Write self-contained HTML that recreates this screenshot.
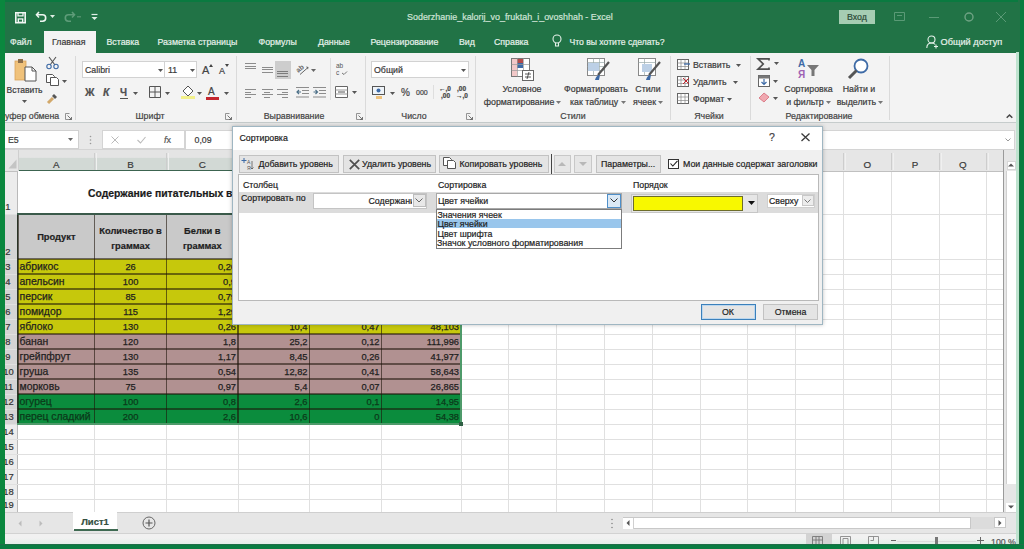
<!DOCTYPE html>
<html><head><meta charset="utf-8"><style>
*{box-sizing:border-box;margin:0;padding:0}
html,body{width:1024px;height:549px;overflow:hidden;background:#0b8a3e;font-family:"Liberation Sans",sans-serif;position:relative}
.a{position:absolute}
.t{position:absolute;white-space:nowrap;color:#3b3b3b;-webkit-text-stroke:0.2px currentColor}
svg.a{overflow:visible}
</style></head><body>
<div class="a" style="left:5px;top:0px;width:1014px;height:52.5px;background:#217346"></div>
<div class="a" style="left:5px;top:0px;width:1013px;height:2px;background:#0a7a40"></div>
<svg class="a" style="left:15px;top:12.3px;" width="11" height="11.5" viewBox="0 0 11 11.5"><path d="M0.8 0.8h9.4v9.9H0.8z" fill="none" stroke="#f2f7f4" stroke-width="1.6"/><path d="M3 0.8v3h5v-3" fill="none" stroke="#f2f7f4" stroke-width="1.3"/><rect x="2.6" y="6.3" width="5.8" height="4.4" fill="#f2f7f4"/><rect x="4" y="7.6" width="3" height="2" fill="#217346"/></svg>
<svg class="a" style="left:35px;top:10px;" width="14" height="13" viewBox="0 0 14 13"><path d="M4 2L1.5 4.8 4 7.5" fill="none" stroke="#eef6f1" stroke-width="1.6"/><path d="M2 4.8h5.5a3.2 3.2 0 0 1 0 6.4H5" fill="none" stroke="#eef6f1" stroke-width="1.6"/></svg>
<svg class="a" style="left:50px;top:15px;" width="5" height="3" viewBox="0 0 5 3"><path d="M0 0h5L2.5 3z" fill="#dfeee5"/></svg>
<svg class="a" style="left:62px;top:10px;" width="14" height="13" viewBox="0 0 14 13"><path d="M10 2l2.5 2.8L10 7.5" fill="none" stroke="#5e9c79" stroke-width="1.6"/><path d="M12 4.8H6.5a3.2 3.2 0 0 0 0 6.4H9" fill="none" stroke="#5e9c79" stroke-width="1.6"/></svg>
<svg class="a" style="left:77px;top:16px;" width="5" height="2" viewBox="0 0 5 2"><path d="M0 0h4v1.5H0z" fill="#4f8f6a"/></svg>
<svg class="a" style="left:91px;top:13px;" width="7" height="8" viewBox="0 0 7 8"><path d="M0.5 1.5h6" stroke="#dfeee5" stroke-width="1.2"/><path d="M0.5 4h6L3.5 7z" fill="#dfeee5"/></svg>
<div class="t" style="left:407px;top:12.92px;font-size:8.95px;line-height:8.95px;color:#cfe3d6">Soderzhanie_kalorij_vo_fruktah_i_ovoshhah - Excel</div>
<div class="a" style="left:839px;top:10px;width:36px;height:14px;background:#a6cdb3"></div>
<div class="t" style="left:837.00px;width:40px;text-align:center;top:13.05px;font-size:8.8px;line-height:8.8px;color:#2b4a37">Вход</div>
<svg class="a" style="left:894px;top:12px;" width="11" height="9" viewBox="0 0 11 9"><path d="M0.5 0.5h10v8h-10z" fill="none" stroke="#5a9a76" stroke-width="1"/><path d="M3 3.5h5" stroke="#5a9a76"/></svg>
<div class="a" style="left:929px;top:17px;width:10px;height:1px;background:#5a9a76"></div>
<svg class="a" style="left:963px;top:11px;" width="12" height="11" viewBox="0 0 12 11"><circle cx="6" cy="6" r="4" fill="none" stroke="#6fa384" stroke-width="1.4"/></svg>
<svg class="a" style="left:995px;top:11px;" width="12" height="12" viewBox="0 0 12 12"><path d="M1 1l10 10M11 1L1 11" stroke="#5a9a76" stroke-width="1"/></svg>
<div class="t" style="left:10px;top:38.05px;font-size:8.8px;line-height:8.8px;color:#e6f1ea">Файл</div>
<div class="a" style="left:44px;top:31px;width:52px;height:22px;background:#f3f3f3"></div>
<div class="t" style="left:52px;top:38.05px;font-size:8.8px;line-height:8.8px;color:#3a3a3a">Главная</div>
<div class="t" style="left:106.5px;top:38.05px;font-size:8.8px;line-height:8.8px;color:#e6f1ea">Вставка</div>
<div class="t" style="left:157.5px;top:38.05px;font-size:8.8px;line-height:8.8px;color:#e6f1ea">Разметка страницы</div>
<div class="t" style="left:258.5px;top:38.05px;font-size:8.8px;line-height:8.8px;color:#e6f1ea">Формулы</div>
<div class="t" style="left:318px;top:38.05px;font-size:8.8px;line-height:8.8px;color:#e6f1ea">Данные</div>
<div class="t" style="left:370.5px;top:38.05px;font-size:8.8px;line-height:8.8px;color:#e6f1ea">Рецензирование</div>
<div class="t" style="left:459px;top:38.05px;font-size:8.8px;line-height:8.8px;color:#e6f1ea">Вид</div>
<div class="t" style="left:494px;top:38.05px;font-size:8.8px;line-height:8.8px;color:#e6f1ea">Справка</div>
<svg class="a" style="left:552px;top:34px;" width="10" height="14" viewBox="0 0 10 14"><circle cx="5" cy="5" r="4" fill="none" stroke="#e6f1ea" stroke-width="1.1"/><path d="M3.5 9v3h3V9" fill="none" stroke="#e6f1ea" stroke-width="1.1"/></svg>
<div class="t" style="left:569.5px;top:38.22px;font-size:8.6px;line-height:8.6px;color:#e6f1ea">Что вы хотите сделать?</div>
<svg class="a" style="left:926px;top:35px;" width="13" height="14" viewBox="0 0 13 14"><circle cx="5.5" cy="4.5" r="3.5" fill="none" stroke="#e6f1ea" stroke-width="1.1"/><path d="M0.8 13c0-3.5 2-5 4.7-5s3 .8 3.6 1.5" fill="none" stroke="#e6f1ea" stroke-width="1.1"/><path d="M10 9.5v4M8 11.5h4" stroke="#e6f1ea" stroke-width="1.1"/></svg>
<div class="t" style="left:940.5px;top:37.71px;font-size:9.2px;line-height:9.2px;color:#e6f1ea">Общий доступ</div>
<div class="a" style="left:5px;top:52.5px;width:1013px;height:70.5px;background:#f3f3f3"></div>
<div class="a" style="left:5px;top:122px;width:1013px;height:1px;background:#c6cccc"></div>
<div class="a" style="left:75px;top:56px;width:1px;height:64px;background:#dadada"></div>
<div class="a" style="left:235.5px;top:56px;width:1px;height:64px;background:#dadada"></div>
<div class="a" style="left:365px;top:56px;width:1px;height:64px;background:#dadada"></div>
<div class="a" style="left:475px;top:56px;width:1px;height:64px;background:#dadada"></div>
<div class="a" style="left:670px;top:56px;width:1px;height:64px;background:#dadada"></div>
<div class="a" style="left:750px;top:56px;width:1px;height:64px;background:#dadada"></div>
<div class="a" style="left:888.5px;top:56px;width:1px;height:64px;background:#dadada"></div>
<svg class="a" style="left:13px;top:58px;" width="26" height="24" viewBox="0 0 26 24"><rect x="2" y="3" width="11" height="19" fill="#f0c27b" stroke="#d9a35a" stroke-width="0.8"/><rect x="5" y="1" width="5" height="4" fill="#8a6d4a"/><path d="M12 9h7l4 4v10H12z" fill="#fff" stroke="#555" stroke-width="1"/><path d="M19 9v4h4" fill="none" stroke="#555" stroke-width="1"/></svg>
<div class="t" style="left:6.5px;top:86.30px;font-size:8.5px;line-height:8.5px;color:#3a3a3a">Вставить</div>
<svg class="a" style="left:22px;top:100px;" width="5" height="3" viewBox="0 0 5 3"><path d="M0 0h5L2.5 3z" fill="#555"/></svg>
<svg class="a" style="left:46px;top:56px;" width="13" height="13" viewBox="0 0 13 13"><path d="M3 1l6 8M10 1L4 9" stroke="#555" stroke-width="1.1"/><circle cx="3" cy="10.5" r="2.2" fill="none" stroke="#3d6aa6" stroke-width="1.1"/><circle cx="10" cy="10.5" r="2.2" fill="none" stroke="#3d6aa6" stroke-width="1.1"/></svg>
<svg class="a" style="left:46px;top:74px;" width="13" height="12" viewBox="0 0 13 12"><path d="M0.5 0.5h6l2 2v6h-8z" fill="#fff" stroke="#555"/><path d="M4.5 3.5h6l2 2v6h-8z" fill="#fff" stroke="#555"/></svg>
<svg class="a" style="left:62px;top:80px;" width="5" height="3" viewBox="0 0 5 3"><path d="M0 0h5L2.5 3z" fill="#555"/></svg>
<svg class="a" style="left:47px;top:92px;" width="12" height="12" viewBox="0 0 12 12"><path d="M1 11l5-5" stroke="#d2a86a" stroke-width="3"/><path d="M7 2l3 3-2 2-3-3z" fill="#555"/></svg>
<div class="t" style="left:5px;top:111.85px;font-size:8.8px;line-height:8.8px;color:#444">уфер обмена</div>
<svg class="a" style="left:65px;top:113px;" width="7" height="7" viewBox="0 0 7 7"><path d="M0.5 0.5h4M0.5 0.5v6M0.5 6.5h6" fill="none" stroke="#888" stroke-width="0.9"/><path d="M2.5 2.5l4 4M6.5 4v2.5H4" fill="none" stroke="#666" stroke-width="0.9"/></svg>
<div class="a" style="left:82px;top:61px;width:83px;height:17px;background:#fff;border:1px solid #d2d2d2"></div>
<div class="t" style="left:85px;top:66.05px;font-size:8.8px;line-height:8.8px;color:#3a3a3a">Calibri</div>
<svg class="a" style="left:158px;top:69px;" width="5" height="3" viewBox="0 0 5 3"><path d="M0 0h5L2.5 3z" fill="#555"/></svg>
<div class="a" style="left:164px;top:61px;width:33px;height:17px;background:#fff;border:1px solid #d2d2d2"></div>
<div class="t" style="left:168px;top:66.05px;font-size:8.8px;line-height:8.8px;color:#3a3a3a">11</div>
<svg class="a" style="left:190px;top:69px;" width="5" height="3" viewBox="0 0 5 3"><path d="M0 0h5L2.5 3z" fill="#555"/></svg>
<div class="t" style="left:202px;top:65.19px;font-size:11px;line-height:11px;color:#444">A</div>
<svg class="a" style="left:209px;top:64px;" width="4" height="3" viewBox="0 0 4 3"><path d="M0 3l2-3 2 3z" fill="#444"/></svg>
<div class="t" style="left:219px;top:66.88px;font-size:9px;line-height:9px;color:#444">A</div>
<svg class="a" style="left:225px;top:64px;" width="4" height="3" viewBox="0 0 4 3"><path d="M0 0l2 3 2-3z" fill="#444"/></svg>
<div class="t" style="left:85px;top:87.11px;font-size:10.5px;line-height:10.5px;font-weight:bold;color:#505050">Ж</div>
<div class="t" style="left:103px;top:87.11px;font-size:10.5px;line-height:10.5px;font-weight:bold;font-style:italic;color:#505050">К</div>
<div class="t" style="left:120px;top:87.53px;font-size:10px;line-height:10px;color:#505050;font-weight:bold">Ч</div>
<div class="a" style="left:120px;top:98px;width:7.5px;height:1px;background:#505050"></div>
<svg class="a" style="left:133px;top:91.5px;" width="5" height="3" viewBox="0 0 5 3"><path d="M0 0h5L2.5 3z" fill="#555"/></svg>
<svg class="a" style="left:149px;top:86px;" width="12" height="12" viewBox="0 0 12 12"><path d="M0.5 0.5h11v11h-11zM6 0.5v11M0.5 6h11" fill="none" stroke="#555" stroke-width="1"/></svg>
<svg class="a" style="left:165px;top:91.5px;" width="5" height="3" viewBox="0 0 5 3"><path d="M0 0h5L2.5 3z" fill="#555"/></svg>
<svg class="a" style="left:181px;top:85px;" width="14" height="14" viewBox="0 0 14 14"><path d="M2 6l5-5 5 5-5 5z" fill="#fff" stroke="#555"/><rect x="0" y="11" width="14" height="3" fill="#f2f08a"/></svg>
<svg class="a" style="left:197px;top:91.5px;" width="5" height="3" viewBox="0 0 5 3"><path d="M0 0h5L2.5 3z" fill="#555"/></svg>
<div class="t" style="left:208px;top:86.53px;font-size:10px;line-height:10px;color:#444">А</div>
<div class="a" style="left:206px;top:96.5px;width:13px;height:3px;background:#c4262e"></div>
<svg class="a" style="left:224px;top:91.5px;" width="5" height="3" viewBox="0 0 5 3"><path d="M0 0h5L2.5 3z" fill="#555"/></svg>
<div class="t" style="left:120.00px;width:60px;text-align:center;top:111.85px;font-size:8.8px;line-height:8.8px;color:#444">Шрифт</div>
<svg class="a" style="left:225px;top:113px;" width="7" height="7" viewBox="0 0 7 7"><path d="M0.5 0.5h4M0.5 0.5v6M0.5 6.5h6" fill="none" stroke="#888" stroke-width="0.9"/><path d="M2.5 2.5l4 4M6.5 4v2.5H4" fill="none" stroke="#666" stroke-width="0.9"/></svg>
<div class="a" style="left:245px;top:63px;width:11px;height:1px;background:#8c8c8c"></div>
<div class="a" style="left:245px;top:65.5px;width:11px;height:1px;background:#8c8c8c"></div>
<div class="a" style="left:245px;top:68px;width:11px;height:1px;background:#8c8c8c"></div>
<div class="a" style="left:261.5px;top:66.5px;width:11px;height:1px;background:#8c8c8c"></div>
<div class="a" style="left:261.5px;top:69px;width:11px;height:1px;background:#8c8c8c"></div>
<div class="a" style="left:261.5px;top:71.5px;width:11px;height:1px;background:#8c8c8c"></div>
<div class="a" style="left:275px;top:61px;width:16px;height:18px;background:#cdcdcd"></div>
<div class="a" style="left:277px;top:70.5px;width:11px;height:1px;background:#7c7c7c"></div>
<div class="a" style="left:277px;top:73px;width:11px;height:1px;background:#7c7c7c"></div>
<div class="a" style="left:277px;top:75.5px;width:11px;height:1px;background:#7c7c7c"></div>
<svg class="a" style="left:296px;top:63px;" width="13" height="12" viewBox="0 0 13 12"><text x="0" y="8" font-size="7" font-family="Liberation Sans" font-weight="bold" fill="#666" transform="rotate(-40 4 6)">ab</text><path d="M4 11.5l8-7" stroke="#666" stroke-width="1"/><path d="M10 3.5l2.5 0.5-0.5 2.5" fill="#666"/></svg>
<svg class="a" style="left:311px;top:68.5px;" width="5" height="3" viewBox="0 0 5 3"><path d="M0 0h5L2.5 3z" fill="#666"/></svg>
<div class="a" style="left:245px;top:89.0px;width:11px;height:1px;background:#8c8c8c"></div>
<div class="a" style="left:245px;top:91.5px;width:6px;height:1px;background:#8c8c8c"></div>
<div class="a" style="left:245px;top:94.0px;width:11px;height:1px;background:#8c8c8c"></div>
<div class="a" style="left:245px;top:96.5px;width:6px;height:1px;background:#8c8c8c"></div>
<div class="a" style="left:261.5px;top:89.0px;width:11px;height:1px;background:#8c8c8c"></div>
<div class="a" style="left:264.0px;top:91.5px;width:6px;height:1px;background:#8c8c8c"></div>
<div class="a" style="left:261.5px;top:94.0px;width:11px;height:1px;background:#8c8c8c"></div>
<div class="a" style="left:264.0px;top:96.5px;width:6px;height:1px;background:#8c8c8c"></div>
<div class="a" style="left:277px;top:89.0px;width:11px;height:1px;background:#8c8c8c"></div>
<div class="a" style="left:282px;top:91.5px;width:6px;height:1px;background:#8c8c8c"></div>
<div class="a" style="left:277px;top:94.0px;width:11px;height:1px;background:#8c8c8c"></div>
<div class="a" style="left:282px;top:96.5px;width:6px;height:1px;background:#8c8c8c"></div>
<svg class="a" style="left:296px;top:87px;" width="13" height="11" viewBox="0 0 13 11"><rect x="0" y="0" width="13" height="1" fill="#8c8c8c"/><rect x="6" y="3" width="7" height="1" fill="#8c8c8c"/><rect x="6" y="6" width="7" height="1" fill="#8c8c8c"/><rect x="0" y="9.5" width="13" height="1" fill="#8c8c8c"/><path d="M5 5H1M3 3L1 5l2 2" stroke="#4d7088" stroke-width="1.2" fill="none"/></svg>
<svg class="a" style="left:312.5px;top:87px;" width="13" height="11" viewBox="0 0 13 11"><rect x="0" y="0" width="13" height="1" fill="#8c8c8c"/><rect x="6" y="3" width="7" height="1" fill="#8c8c8c"/><rect x="6" y="6" width="7" height="1" fill="#8c8c8c"/><rect x="0" y="9.5" width="13" height="1" fill="#8c8c8c"/><path d="M0.5 5h4M2.5 3l2 2-2 2" stroke="#4d7088" stroke-width="1.2" fill="none"/></svg>
<div class="a" style="left:330px;top:58px;width:1px;height:42px;background:#dedede"></div>
<svg class="a" style="left:336px;top:62px;" width="12" height="14" viewBox="0 0 12 14"><text x="0" y="6" font-size="6.5" font-family="Liberation Sans" fill="#555">ab</text><text x="0" y="13" font-size="6.5" font-family="Liberation Sans" fill="#555">c</text><path d="M6 11l2 1.5 3-3" fill="none" stroke="#777"/></svg>
<svg class="a" style="left:335px;top:86px;" width="13" height="12" viewBox="0 0 13 12"><path d="M0.5 0.5h12v11h-12z" fill="#fff" stroke="#666"/><path d="M0.5 4h12M0.5 8h12" stroke="#999"/><path d="M3 6h7" stroke="#555"/></svg>
<svg class="a" style="left:352px;top:91px;" width="5" height="3" viewBox="0 0 5 3"><path d="M0 0h5L2.5 3z" fill="#555"/></svg>
<div class="t" style="left:244.00px;width:100px;text-align:center;top:111.85px;font-size:8.8px;line-height:8.8px;color:#444">Выравнивание</div>
<svg class="a" style="left:356px;top:113px;" width="7" height="7" viewBox="0 0 7 7"><path d="M0.5 0.5h4M0.5 0.5v6M0.5 6.5h6" fill="none" stroke="#888" stroke-width="0.9"/><path d="M2.5 2.5l4 4M6.5 4v2.5H4" fill="none" stroke="#666" stroke-width="0.9"/></svg>
<div class="a" style="left:371px;top:61px;width:98px;height:17px;background:#fff;border:1px solid #d2d2d2"></div>
<div class="t" style="left:374px;top:66.05px;font-size:8.8px;line-height:8.8px;color:#3a3a3a">Общий</div>
<svg class="a" style="left:461px;top:69px;" width="5" height="3" viewBox="0 0 5 3"><path d="M0 0h5L2.5 3z" fill="#555"/></svg>
<svg class="a" style="left:372px;top:86px;" width="15" height="14" viewBox="0 0 15 14"><rect x="0.5" y="0.5" width="12" height="8" fill="#eef3f8" stroke="#555"/><circle cx="6.5" cy="4.5" r="2" fill="#3d6aa6"/><rect x="4" y="10" width="6" height="3" fill="#f0c27b"/></svg>
<svg class="a" style="left:390px;top:91.5px;" width="5" height="3" viewBox="0 0 5 3"><path d="M0 0h5L2.5 3z" fill="#555"/></svg>
<div class="t" style="left:401px;top:87.53px;font-size:10px;line-height:10px;color:#444">%</div>
<div class="t" style="left:416px;top:89.07px;font-size:7px;line-height:7px;color:#444">000</div>
<div class="a" style="left:433px;top:85px;width:1px;height:14px;background:#dedede"></div>
<div class="t" style="left:439px;top:86.00px;font-size:6.5px;line-height:6.5px;color:#444;font-weight:bold">←,0</div>
<div class="t" style="left:441px;top:93.00px;font-size:6.5px;line-height:6.5px;color:#444;font-weight:bold">,00</div>
<div class="t" style="left:457px;top:86.00px;font-size:6.5px;line-height:6.5px;color:#444;font-weight:bold">,00</div>
<div class="t" style="left:456px;top:93.00px;font-size:6.5px;line-height:6.5px;color:#444;font-weight:bold">→,0</div>
<div class="t" style="left:384.00px;width:60px;text-align:center;top:111.85px;font-size:8.8px;line-height:8.8px;color:#444">Число</div>
<svg class="a" style="left:466px;top:113px;" width="7" height="7" viewBox="0 0 7 7"><path d="M0.5 0.5h4M0.5 0.5v6M0.5 6.5h6" fill="none" stroke="#888" stroke-width="0.9"/><path d="M2.5 2.5l4 4M6.5 4v2.5H4" fill="none" stroke="#666" stroke-width="0.9"/></svg>
<svg class="a" style="left:511px;top:58px;" width="23" height="23" viewBox="0 0 23 23"><rect x="0.5" y="0.5" width="18" height="18" fill="#fff" stroke="#777"/><rect x="1" y="1" width="5" height="17" fill="#f2c8c8"/><rect x="6" y="5" width="6" height="5" fill="#3d6aa6"/><rect x="6" y="1" width="6" height="4" fill="#b34a4a"/><path d="M0.5 6.5h18M0.5 12.5h18M6.5 0.5v18M12.5 0.5v18" stroke="#999" stroke-width="0.7"/><rect x="11.5" y="12.5" width="11" height="10" fill="#fff" stroke="#666"/><path d="M14 16h6M14 19h6M18 14l-2 7" stroke="#444" stroke-width="0.9"/></svg>
<div class="t" style="left:482.00px;width:80px;text-align:center;top:85.05px;font-size:8.8px;line-height:8.8px;color:#3a3a3a">Условное</div>
<div class="t" style="left:483.8px;top:97.55px;font-size:8.8px;line-height:8.8px;color:#3a3a3a">форматирование</div>
<svg class="a" style="left:556px;top:100.5px;" width="5" height="3" viewBox="0 0 5 3"><path d="M0 0h5L2.5 3z" fill="#777"/></svg>
<svg class="a" style="left:587px;top:58px;" width="24" height="24" viewBox="0 0 24 24"><rect x="0.5" y="0.5" width="17" height="17" fill="#fff" stroke="#888"/><path d="M0.5 4.5h17M0.5 8.5h17M0.5 12.5h17M6.5 0.5v17M12.5 0.5v17" stroke="#9aa" stroke-width="0.7"/><rect x="1" y="5" width="11" height="8" fill="#bcd0e6"/><path d="M22 4L11 17" stroke="#555" stroke-width="2.2"/><path d="M8 22c1-4 3-5 5-5l-1 5z" fill="#3d6aa6"/></svg>
<div class="t" style="left:551.00px;width:90px;text-align:center;top:85.05px;font-size:8.8px;line-height:8.8px;color:#3a3a3a">Форматировать</div>
<div class="t" style="left:570px;top:97.55px;font-size:8.8px;line-height:8.8px;color:#3a3a3a">как таблицу</div>
<svg class="a" style="left:621px;top:100.5px;" width="5" height="3" viewBox="0 0 5 3"><path d="M0 0h5L2.5 3z" fill="#777"/></svg>
<svg class="a" style="left:638px;top:58px;" width="23" height="24" viewBox="0 0 23 24"><rect x="0.5" y="0.5" width="17" height="17" fill="#fff" stroke="#888"/><path d="M0.5 4.5h17M6.5 0.5v17" stroke="#9aa" stroke-width="0.7"/><rect x="4" y="6" width="10" height="8" fill="#bcd0e6"/><path d="M22 4L11 17" stroke="#555" stroke-width="2.2"/><path d="M8 22c1-4 3-5 5-5l-1 5z" fill="#3d6aa6"/></svg>
<div class="t" style="left:618.00px;width:60px;text-align:center;top:85.05px;font-size:8.8px;line-height:8.8px;color:#3a3a3a">Стили</div>
<div class="t" style="left:633px;top:97.55px;font-size:8.8px;line-height:8.8px;color:#3a3a3a">ячеек</div>
<svg class="a" style="left:657.6px;top:100.5px;" width="5" height="3" viewBox="0 0 5 3"><path d="M0 0h5L2.5 3z" fill="#777"/></svg>
<div class="t" style="left:543.00px;width:60px;text-align:center;top:111.85px;font-size:8.8px;line-height:8.8px;color:#444">Стили</div>
<svg class="a" style="left:677px;top:59px;" width="13" height="12" viewBox="0 0 13 12"><rect x="0.5" y="0.5" width="11" height="10" fill="#fff" stroke="#666"/><path d="M0.5 4h11M0.5 7.5h11M4 0.5v10M8 0.5v10" stroke="#888" stroke-width="0.7"/><path d="M7 5h6" stroke="#3d6aa6" stroke-width="1.3"/></svg>
<div class="t" style="left:693px;top:60.55px;font-size:8.8px;line-height:8.8px;color:#3a3a3a">Вставить</div>
<svg class="a" style="left:736px;top:64px;" width="5" height="3" viewBox="0 0 5 3"><path d="M0 0h5L2.5 3z" fill="#555"/></svg>
<svg class="a" style="left:677px;top:76px;" width="13" height="12" viewBox="0 0 13 12"><rect x="0.5" y="0.5" width="11" height="10" fill="#fff" stroke="#666"/><path d="M0.5 4h11M0.5 7.5h11M4 0.5v10M8 0.5v10" stroke="#888" stroke-width="0.7"/><path d="M6 2l6 6M12 2L6 8" stroke="#c4262e" stroke-width="1"/></svg>
<div class="t" style="left:693px;top:77.55px;font-size:8.8px;line-height:8.8px;color:#3a3a3a">Удалить</div>
<svg class="a" style="left:733px;top:80.5px;" width="5" height="3" viewBox="0 0 5 3"><path d="M0 0h5L2.5 3z" fill="#555"/></svg>
<svg class="a" style="left:677px;top:93px;" width="13" height="12" viewBox="0 0 13 12"><rect x="0.5" y="0.5" width="11" height="10" fill="#fff" stroke="#666"/><path d="M0.5 4h11M0.5 7.5h11M4 0.5v10M8 0.5v10" stroke="#888" stroke-width="0.7"/></svg>
<div class="t" style="left:693px;top:95.05px;font-size:8.8px;line-height:8.8px;color:#3a3a3a">Формат</div>
<svg class="a" style="left:727px;top:97.5px;" width="5" height="3" viewBox="0 0 5 3"><path d="M0 0h5L2.5 3z" fill="#555"/></svg>
<div class="t" style="left:679.00px;width:60px;text-align:center;top:111.85px;font-size:8.8px;line-height:8.8px;color:#444">Ячейки</div>
<svg class="a" style="left:757px;top:57.5px;" width="13" height="12" viewBox="0 0 13 12"><path d="M12 2.5V0.8H1l5.2 5.2L1 11.2h11V9.5" fill="none" stroke="#505050" stroke-width="1.7"/></svg>
<svg class="a" style="left:774px;top:62px;" width="5" height="3" viewBox="0 0 5 3"><path d="M0 0h5L2.5 3z" fill="#555"/></svg>
<svg class="a" style="left:758px;top:75px;" width="12" height="12" viewBox="0 0 12 12"><rect x="0.5" y="0.5" width="11" height="11" fill="#fff" stroke="#666"/><rect x="0.5" y="0.5" width="11" height="3" fill="#777"/><path d="M6 4v5M3.5 7L6 9.5 8.5 7" fill="none" stroke="#3d6aa6" stroke-width="1.2"/></svg>
<svg class="a" style="left:773px;top:80px;" width="5" height="3" viewBox="0 0 5 3"><path d="M0 0h5L2.5 3z" fill="#555"/></svg>
<svg class="a" style="left:758px;top:92px;" width="12" height="10" viewBox="0 0 12 10"><path d="M1 6l5-5 5 4-5 5z" fill="#f0a8b0" stroke="#d66a78" stroke-width="0.8"/></svg>
<svg class="a" style="left:773px;top:97px;" width="5" height="3" viewBox="0 0 5 3"><path d="M0 0h5L2.5 3z" fill="#555"/></svg>
<svg class="a" style="left:797px;top:58px;" width="23" height="22" viewBox="0 0 23 22"><text x="1" y="9" font-size="10" font-family="Liberation Sans" fill="#3d6aa6" font-weight="bold">A</text><text x="1" y="20" font-size="10" font-family="Liberation Sans" fill="#9e62b3" font-weight="bold">Я</text><path d="M10 7h12l-4.5 5v6h-3v-6z" fill="#777"/></svg>
<div class="t" style="left:768.50px;width:80px;text-align:center;top:85.05px;font-size:8.8px;line-height:8.8px;color:#3a3a3a">Сортировка</div>
<div class="t" style="left:786.2px;top:97.55px;font-size:8.8px;line-height:8.8px;color:#3a3a3a">и фильтр</div>
<svg class="a" style="left:826.4px;top:100.5px;" width="5" height="3" viewBox="0 0 5 3"><path d="M0 0h5L2.5 3z" fill="#777"/></svg>
<svg class="a" style="left:847px;top:58px;" width="23" height="23" viewBox="0 0 23 23"><circle cx="14" cy="8" r="6.5" fill="#fff" stroke="#3d6aa6" stroke-width="1.8"/><path d="M9.5 12.5L2 20" stroke="#555" stroke-width="3"/></svg>
<div class="t" style="left:819.00px;width:80px;text-align:center;top:85.05px;font-size:8.8px;line-height:8.8px;color:#3a3a3a">Найти и</div>
<div class="t" style="left:836.7px;top:97.55px;font-size:8.8px;line-height:8.8px;color:#3a3a3a">выделить</div>
<svg class="a" style="left:877.6px;top:100.5px;" width="5" height="3" viewBox="0 0 5 3"><path d="M0 0h5L2.5 3z" fill="#777"/></svg>
<div class="t" style="left:759.00px;width:120px;text-align:center;top:111.85px;font-size:8.8px;line-height:8.8px;color:#444">Редактирование</div>
<svg class="a" style="left:1005.5px;top:113.5px;" width="7" height="4.5" viewBox="0 0 7 4.5"><path d="M0.7 3.8L3.5 1 6.3 3.8" fill="none" stroke="#444" stroke-width="1.5"/></svg>
<div class="a" style="left:5px;top:123px;width:1013px;height:27px;background:#e8e8e8"></div>
<div class="a" style="left:5px;top:130px;width:74px;height:19px;background:#fff;border:1px solid #d0d0d0;border-left:none"></div>
<div class="t" style="left:8px;top:136.05px;font-size:8.8px;line-height:8.8px;color:#3a3a3a">E5</div>
<svg class="a" style="left:68px;top:138px;" width="5" height="3" viewBox="0 0 5 3"><path d="M0 0h5L2.5 3z" fill="#666"/></svg>
<svg class="a" style="left:89px;top:135px;" width="3" height="10" viewBox="0 0 3 10"><circle cx="1.5" cy="1.5" r="0.8" fill="#999"/><circle cx="1.5" cy="5" r="0.8" fill="#999"/><circle cx="1.5" cy="8.5" r="0.8" fill="#999"/></svg>
<div class="a" style="left:101.5px;top:130px;width:83px;height:19px;background:#fff;border:1px solid #d4d4d4"></div>
<svg class="a" style="left:111px;top:136px;" width="8" height="8" viewBox="0 0 8 8"><path d="M0.5 0.5l7 7M7.5 0.5l-7 7" stroke="#bbb" stroke-width="1"/></svg>
<svg class="a" style="left:137px;top:136px;" width="9" height="8" viewBox="0 0 9 8"><path d="M0.5 4l3 3 5-6" fill="none" stroke="#bbb" stroke-width="1.1"/></svg>
<div class="t" style="left:164px;top:135.88px;font-size:9px;line-height:9px;color:#555"><i>f</i>x</div>
<div class="a" style="left:185px;top:130px;width:830px;height:19.5px;background:#fff;border:1px solid #d4d4d4"></div>
<div class="t" style="left:194.5px;top:136.05px;font-size:8.8px;line-height:8.8px;color:#3a3a3a">0,09</div>
<svg class="a" style="left:1005px;top:138px;" width="6" height="4" viewBox="0 0 6 4"><path d="M0.5 0.5l2.5 2.5 2.5-2.5" fill="none" stroke="#999"/></svg>
<div class="a" style="left:5px;top:149px;width:999px;height:1px;background:#d4d4d4"></div>
<div class="a" style="left:5px;top:150px;width:999px;height:21.5px;background:#e6e6e6"></div>
<div class="a" style="left:5px;top:171px;width:999px;height:1px;background:#c0c0c0"></div>
<div class="a" style="left:18px;top:150px;width:443px;height:21px;background:linear-gradient(#e4e4e4 0%,#e4e4e4 35%,#d2d9d5 40%,#d2d9d5 100%)"></div>
<div class="a" style="left:17.5px;top:170px;width:444px;height:2px;background:#3c6450"></div>
<svg class="a" style="left:8px;top:159px;" width="9" height="10" viewBox="0 0 9 10"><path d="M8.5 0.5v9h-8z" fill="#c4c4c4"/></svg>
<div class="a" style="left:94.1px;top:153px;width:1px;height:17px;background:#cdcdcd"></div>
<div class="a" style="left:96.1px;top:153px;width:1px;height:17px;background:#f0f0f0"></div>
<div class="t" style="left:36.30px;width:40px;text-align:center;top:160.00px;font-size:9.8px;line-height:9.8px;color:#3a3a3a">A</div>
<div class="a" style="left:166.1px;top:153px;width:1px;height:17px;background:#cdcdcd"></div>
<div class="a" style="left:168.1px;top:153px;width:1px;height:17px;background:#f0f0f0"></div>
<div class="t" style="left:110.60px;width:40px;text-align:center;top:160.00px;font-size:9.8px;line-height:9.8px;color:#3a3a3a">B</div>
<div class="a" style="left:237.5px;top:153px;width:1px;height:17px;background:#cdcdcd"></div>
<div class="a" style="left:239.5px;top:153px;width:1px;height:17px;background:#f0f0f0"></div>
<div class="t" style="left:182.30px;width:40px;text-align:center;top:160.00px;font-size:9.8px;line-height:9.8px;color:#3a3a3a">C</div>
<div class="a" style="left:309.0px;top:153px;width:1px;height:17px;background:#cdcdcd"></div>
<div class="a" style="left:311.0px;top:153px;width:1px;height:17px;background:#f0f0f0"></div>
<div class="t" style="left:253.75px;width:40px;text-align:center;top:160.00px;font-size:9.8px;line-height:9.8px;color:#3a3a3a">D</div>
<div class="a" style="left:381.0px;top:153px;width:1px;height:17px;background:#cdcdcd"></div>
<div class="a" style="left:383.0px;top:153px;width:1px;height:17px;background:#f0f0f0"></div>
<div class="t" style="left:325.50px;width:40px;text-align:center;top:160.00px;font-size:9.8px;line-height:9.8px;color:#3a3a3a">E</div>
<div class="a" style="left:460.5px;top:153px;width:1px;height:17px;background:#cdcdcd"></div>
<div class="a" style="left:462.5px;top:153px;width:1px;height:17px;background:#f0f0f0"></div>
<div class="t" style="left:401.25px;width:40px;text-align:center;top:160.00px;font-size:9.8px;line-height:9.8px;color:#3a3a3a">F</div>
<div class="a" style="left:508.3px;top:153px;width:1px;height:17px;background:#cdcdcd"></div>
<div class="a" style="left:510.3px;top:153px;width:1px;height:17px;background:#f0f0f0"></div>
<div class="t" style="left:464.90px;width:40px;text-align:center;top:160.00px;font-size:9.8px;line-height:9.8px;color:#3a3a3a">G</div>
<div class="a" style="left:556.1px;top:153px;width:1px;height:17px;background:#cdcdcd"></div>
<div class="a" style="left:558.1px;top:153px;width:1px;height:17px;background:#f0f0f0"></div>
<div class="t" style="left:512.70px;width:40px;text-align:center;top:160.00px;font-size:9.8px;line-height:9.8px;color:#3a3a3a">H</div>
<div class="a" style="left:603.9px;top:153px;width:1px;height:17px;background:#cdcdcd"></div>
<div class="a" style="left:605.9px;top:153px;width:1px;height:17px;background:#f0f0f0"></div>
<div class="t" style="left:560.50px;width:40px;text-align:center;top:160.00px;font-size:9.8px;line-height:9.8px;color:#3a3a3a">I</div>
<div class="a" style="left:651.7px;top:153px;width:1px;height:17px;background:#cdcdcd"></div>
<div class="a" style="left:653.7px;top:153px;width:1px;height:17px;background:#f0f0f0"></div>
<div class="t" style="left:608.30px;width:40px;text-align:center;top:160.00px;font-size:9.8px;line-height:9.8px;color:#3a3a3a">J</div>
<div class="a" style="left:699.5px;top:153px;width:1px;height:17px;background:#cdcdcd"></div>
<div class="a" style="left:701.5px;top:153px;width:1px;height:17px;background:#f0f0f0"></div>
<div class="t" style="left:656.10px;width:40px;text-align:center;top:160.00px;font-size:9.8px;line-height:9.8px;color:#3a3a3a">K</div>
<div class="a" style="left:747.3px;top:153px;width:1px;height:17px;background:#cdcdcd"></div>
<div class="a" style="left:749.3px;top:153px;width:1px;height:17px;background:#f0f0f0"></div>
<div class="t" style="left:703.90px;width:40px;text-align:center;top:160.00px;font-size:9.8px;line-height:9.8px;color:#3a3a3a">L</div>
<div class="a" style="left:795.1px;top:153px;width:1px;height:17px;background:#cdcdcd"></div>
<div class="a" style="left:797.1px;top:153px;width:1px;height:17px;background:#f0f0f0"></div>
<div class="t" style="left:751.70px;width:40px;text-align:center;top:160.00px;font-size:9.8px;line-height:9.8px;color:#3a3a3a">M</div>
<div class="a" style="left:842.9px;top:153px;width:1px;height:17px;background:#cdcdcd"></div>
<div class="a" style="left:844.9px;top:153px;width:1px;height:17px;background:#f0f0f0"></div>
<div class="t" style="left:799.50px;width:40px;text-align:center;top:160.00px;font-size:9.8px;line-height:9.8px;color:#3a3a3a">N</div>
<div class="a" style="left:890.7px;top:153px;width:1px;height:17px;background:#cdcdcd"></div>
<div class="a" style="left:892.7px;top:153px;width:1px;height:17px;background:#f0f0f0"></div>
<div class="t" style="left:847.30px;width:40px;text-align:center;top:160.00px;font-size:9.8px;line-height:9.8px;color:#3a3a3a">O</div>
<div class="a" style="left:938.5px;top:153px;width:1px;height:17px;background:#cdcdcd"></div>
<div class="a" style="left:940.5px;top:153px;width:1px;height:17px;background:#f0f0f0"></div>
<div class="t" style="left:895.10px;width:40px;text-align:center;top:160.00px;font-size:9.8px;line-height:9.8px;color:#3a3a3a">P</div>
<div class="a" style="left:986.3px;top:153px;width:1px;height:17px;background:#cdcdcd"></div>
<div class="a" style="left:988.3px;top:153px;width:1px;height:17px;background:#f0f0f0"></div>
<div class="t" style="left:942.90px;width:40px;text-align:center;top:160.00px;font-size:9.8px;line-height:9.8px;color:#3a3a3a">Q</div>
<div class="a" style="left:1003.0px;top:153px;width:1px;height:17px;background:#cdcdcd"></div>
<div class="a" style="left:1005.0px;top:153px;width:1px;height:17px;background:#f0f0f0"></div>
<div class="a" style="left:17.5px;top:150px;width:1px;height:21px;background:#cfcfcf"></div>
<div class="a" style="left:5px;top:172px;width:999px;height:340px;background:#fff"></div>
<div class="a" style="left:5px;top:172px;width:12.5px;height:340px;background:#ececec"></div>
<div class="a" style="left:5px;top:214px;width:12.5px;height:210px;background:#d4d4d4"></div>
<div class="a" style="left:17px;top:172px;width:1px;height:340px;background:#b9b9b9"></div>
<div class="a" style="left:94.1px;top:172px;width:1px;height:340px;background:#e0e0e0"></div>
<div class="a" style="left:166.1px;top:172px;width:1px;height:340px;background:#e0e0e0"></div>
<div class="a" style="left:237.5px;top:172px;width:1px;height:340px;background:#e0e0e0"></div>
<div class="a" style="left:309.0px;top:172px;width:1px;height:340px;background:#e0e0e0"></div>
<div class="a" style="left:381.0px;top:172px;width:1px;height:340px;background:#e0e0e0"></div>
<div class="a" style="left:460.5px;top:172px;width:1px;height:340px;background:#e0e0e0"></div>
<div class="a" style="left:508.3px;top:172px;width:1px;height:340px;background:#e0e0e0"></div>
<div class="a" style="left:556.1px;top:172px;width:1px;height:340px;background:#e0e0e0"></div>
<div class="a" style="left:603.9px;top:172px;width:1px;height:340px;background:#e0e0e0"></div>
<div class="a" style="left:651.7px;top:172px;width:1px;height:340px;background:#e0e0e0"></div>
<div class="a" style="left:699.5px;top:172px;width:1px;height:340px;background:#e0e0e0"></div>
<div class="a" style="left:747.3px;top:172px;width:1px;height:340px;background:#e0e0e0"></div>
<div class="a" style="left:795.1px;top:172px;width:1px;height:340px;background:#e0e0e0"></div>
<div class="a" style="left:842.9px;top:172px;width:1px;height:340px;background:#e0e0e0"></div>
<div class="a" style="left:890.7px;top:172px;width:1px;height:340px;background:#e0e0e0"></div>
<div class="a" style="left:938.5px;top:172px;width:1px;height:340px;background:#e0e0e0"></div>
<div class="a" style="left:986.3px;top:172px;width:1px;height:340px;background:#e0e0e0"></div>
<div class="a" style="left:1003.0px;top:172px;width:1px;height:340px;background:#e0e0e0"></div>
<div class="a" style="left:5px;top:213.5px;width:999px;height:1px;background:#e0e0e0"></div>
<div class="a" style="left:5px;top:258.5px;width:999px;height:1px;background:#e0e0e0"></div>
<div class="a" style="left:5px;top:273.5px;width:999px;height:1px;background:#e0e0e0"></div>
<div class="a" style="left:5px;top:288.5px;width:999px;height:1px;background:#e0e0e0"></div>
<div class="a" style="left:5px;top:303.5px;width:999px;height:1px;background:#e0e0e0"></div>
<div class="a" style="left:5px;top:318.5px;width:999px;height:1px;background:#e0e0e0"></div>
<div class="a" style="left:5px;top:333.5px;width:999px;height:1px;background:#e0e0e0"></div>
<div class="a" style="left:5px;top:348.5px;width:999px;height:1px;background:#e0e0e0"></div>
<div class="a" style="left:5px;top:363.5px;width:999px;height:1px;background:#e0e0e0"></div>
<div class="a" style="left:5px;top:378.5px;width:999px;height:1px;background:#e0e0e0"></div>
<div class="a" style="left:5px;top:393.5px;width:999px;height:1px;background:#e0e0e0"></div>
<div class="a" style="left:5px;top:408.5px;width:999px;height:1px;background:#e0e0e0"></div>
<div class="a" style="left:5px;top:423.5px;width:999px;height:1px;background:#e0e0e0"></div>
<div class="a" style="left:5px;top:438.5px;width:999px;height:1px;background:#e0e0e0"></div>
<div class="a" style="left:5px;top:453.5px;width:999px;height:1px;background:#e0e0e0"></div>
<div class="a" style="left:5px;top:468.5px;width:999px;height:1px;background:#e0e0e0"></div>
<div class="a" style="left:5px;top:483.5px;width:999px;height:1px;background:#e0e0e0"></div>
<div class="a" style="left:5px;top:498.5px;width:999px;height:1px;background:#e0e0e0"></div>
<div class="a" style="left:5px;top:511.5px;width:999px;height:1px;background:#e0e0e0"></div>
<div class="a" style="left:16.5px;top:213px;width:2px;height:211px;background:#3c6450"></div>
<div class="a" style="left:1003px;top:150px;width:1px;height:362px;background:#9a9a9a"></div>
<div class="t" style="left:-7.20px;width:30px;text-align:center;top:202.24px;font-size:9.4px;line-height:9.4px;color:#333">1</div>
<div class="t" style="left:-7.20px;width:30px;text-align:center;top:247.24px;font-size:9.4px;line-height:9.4px;color:#333">2</div>
<div class="t" style="left:-7.20px;width:30px;text-align:center;top:262.24px;font-size:9.4px;line-height:9.4px;color:#333">3</div>
<div class="t" style="left:-7.20px;width:30px;text-align:center;top:277.24px;font-size:9.4px;line-height:9.4px;color:#333">4</div>
<div class="t" style="left:-7.20px;width:30px;text-align:center;top:292.24px;font-size:9.4px;line-height:9.4px;color:#333">5</div>
<div class="t" style="left:-7.20px;width:30px;text-align:center;top:307.24px;font-size:9.4px;line-height:9.4px;color:#333">6</div>
<div class="t" style="left:-7.20px;width:30px;text-align:center;top:322.24px;font-size:9.4px;line-height:9.4px;color:#333">7</div>
<div class="t" style="left:-7.20px;width:30px;text-align:center;top:337.24px;font-size:9.4px;line-height:9.4px;color:#333">8</div>
<div class="t" style="left:-7.20px;width:30px;text-align:center;top:352.24px;font-size:9.4px;line-height:9.4px;color:#333">9</div>
<div class="t" style="left:-6.60px;width:30px;text-align:center;top:367.24px;font-size:9.4px;line-height:9.4px;color:#333">10</div>
<div class="t" style="left:-6.60px;width:30px;text-align:center;top:382.24px;font-size:9.4px;line-height:9.4px;color:#333">11</div>
<div class="t" style="left:-6.60px;width:30px;text-align:center;top:397.24px;font-size:9.4px;line-height:9.4px;color:#333">12</div>
<div class="t" style="left:-6.60px;width:30px;text-align:center;top:412.24px;font-size:9.4px;line-height:9.4px;color:#333">13</div>
<div class="t" style="left:-6.60px;width:30px;text-align:center;top:427.24px;font-size:9.4px;line-height:9.4px;color:#333">14</div>
<div class="t" style="left:-6.60px;width:30px;text-align:center;top:442.24px;font-size:9.4px;line-height:9.4px;color:#333">15</div>
<div class="t" style="left:-6.60px;width:30px;text-align:center;top:457.24px;font-size:9.4px;line-height:9.4px;color:#333">16</div>
<div class="t" style="left:-6.60px;width:30px;text-align:center;top:472.24px;font-size:9.4px;line-height:9.4px;color:#333">17</div>
<div class="t" style="left:-6.60px;width:30px;text-align:center;top:487.24px;font-size:9.4px;line-height:9.4px;color:#333">18</div>
<div class="t" style="left:-6.60px;width:30px;text-align:center;top:500.24px;font-size:9.4px;line-height:9.4px;color:#333">19</div>
<div class="a" style="left:1004px;top:150px;width:14px;height:362px;background:#e6e6e6"></div>
<div class="a" style="left:1006.5px;top:160.5px;width:9px;height:9px;background:#fff;border:1px solid #d6d6d6"></div>
<svg class="a" style="left:1008px;top:163px;" width="6" height="4" viewBox="0 0 6 4"><path d="M0 3.5L3 0.5 6 3.5z" fill="#555"/></svg>
<div class="a" style="left:1006px;top:171px;width:10.5px;height:313px;background:#fff;border-left:1px solid #d0d0d0"></div>
<div class="a" style="left:1006px;top:503px;width:10.5px;height:9px;background:#fff"></div>
<svg class="a" style="left:1008px;top:505px;" width="6" height="4" viewBox="0 0 6 4"><path d="M0 0.5L3 3.5 6 0.5z" fill="#555"/></svg>
<div class="a" style="left:18px;top:171px;width:443px;height:43px;background:#fff"></div>
<div class="t" style="left:88px;top:188.70px;font-size:10.4px;line-height:10.4px;font-weight:bold;color:#1a1a1a">Содержание питательных веществ в овощах и фруктах</div>
<div class="a" style="left:18px;top:214px;width:443px;height:45px;background:#c9c9c9"></div>
<div class="t" style="left:11.30px;width:90px;text-align:center;top:233.13px;font-size:9.3px;line-height:9.3px;font-weight:bold;color:#1e1e1e">Продукт</div>
<div class="t" style="left:85.60px;width:90px;text-align:center;top:226.63px;font-size:9.3px;line-height:9.3px;font-weight:bold;color:#1e1e1e">Количество в</div>
<div class="t" style="left:85.60px;width:90px;text-align:center;top:241.63px;font-size:9.3px;line-height:9.3px;font-weight:bold;color:#1e1e1e">граммах</div>
<div class="t" style="left:157.30px;width:90px;text-align:center;top:226.63px;font-size:9.3px;line-height:9.3px;font-weight:bold;color:#1e1e1e">Белки в</div>
<div class="t" style="left:157.30px;width:90px;text-align:center;top:241.63px;font-size:9.3px;line-height:9.3px;font-weight:bold;color:#1e1e1e">граммах</div>
<div class="t" style="left:228.75px;width:90px;text-align:center;top:226.63px;font-size:9.3px;line-height:9.3px;font-weight:bold;color:#1e1e1e">Жиры в</div>
<div class="t" style="left:228.75px;width:90px;text-align:center;top:241.63px;font-size:9.3px;line-height:9.3px;font-weight:bold;color:#1e1e1e">граммах</div>
<div class="t" style="left:300.50px;width:90px;text-align:center;top:226.63px;font-size:9.3px;line-height:9.3px;font-weight:bold;color:#1e1e1e">Углеводы</div>
<div class="t" style="left:300.50px;width:90px;text-align:center;top:241.63px;font-size:9.3px;line-height:9.3px;font-weight:bold;color:#1e1e1e">в граммах</div>
<div class="t" style="left:376.25px;width:90px;text-align:center;top:233.13px;font-size:9.3px;line-height:9.3px;font-weight:bold;color:#1e1e1e">Калорийность</div>
<div class="a" style="left:18px;top:259px;width:443px;height:15px;background:#c6c80c"></div>
<div class="t" style="left:19.5px;top:262.00px;font-size:10.4px;line-height:10.4px;color:#1f1f1f;-webkit-text-stroke:0.25px #1f1f1f">абрикос</div>
<div class="t" style="left:100.60px;width:60px;text-align:center;top:262.93px;font-size:9.3px;line-height:9.3px;color:#1f1f1f;-webkit-text-stroke:0.25px #1f1f1f">26</div>
<div class="t" style="left:176.00px;width:60px;text-align:right;top:262.93px;font-size:9.3px;line-height:9.3px;color:#1f1f1f;-webkit-text-stroke:0.25px #1f1f1f">0,26</div>
<div class="t" style="left:247.50px;width:60px;text-align:right;top:262.93px;font-size:9.3px;line-height:9.3px;color:#1f1f1f;-webkit-text-stroke:0.25px #1f1f1f">0,9</div>
<div class="t" style="left:319.50px;width:60px;text-align:right;top:262.93px;font-size:9.3px;line-height:9.3px;color:#1f1f1f;-webkit-text-stroke:0.25px #1f1f1f">0,1</div>
<div class="t" style="left:399.00px;width:60px;text-align:right;top:262.93px;font-size:9.3px;line-height:9.3px;color:#1f1f1f;-webkit-text-stroke:0.25px #1f1f1f">4,48</div>
<div class="a" style="left:18px;top:274px;width:443px;height:15px;background:#c6c80c"></div>
<div class="t" style="left:19.5px;top:277.00px;font-size:10.4px;line-height:10.4px;color:#1f1f1f;-webkit-text-stroke:0.25px #1f1f1f">апельсин</div>
<div class="t" style="left:100.60px;width:60px;text-align:center;top:277.93px;font-size:9.3px;line-height:9.3px;color:#1f1f1f;-webkit-text-stroke:0.25px #1f1f1f">100</div>
<div class="t" style="left:176.00px;width:60px;text-align:right;top:277.93px;font-size:9.3px;line-height:9.3px;color:#1f1f1f;-webkit-text-stroke:0.25px #1f1f1f">0,9</div>
<div class="t" style="left:247.50px;width:60px;text-align:right;top:277.93px;font-size:9.3px;line-height:9.3px;color:#1f1f1f;-webkit-text-stroke:0.25px #1f1f1f">8,1</div>
<div class="t" style="left:319.50px;width:60px;text-align:right;top:277.93px;font-size:9.3px;line-height:9.3px;color:#1f1f1f;-webkit-text-stroke:0.25px #1f1f1f">0,2</div>
<div class="t" style="left:399.00px;width:60px;text-align:right;top:277.93px;font-size:9.3px;line-height:9.3px;color:#1f1f1f;-webkit-text-stroke:0.25px #1f1f1f">43,19</div>
<div class="a" style="left:18px;top:289px;width:443px;height:15px;background:#c6c80c"></div>
<div class="t" style="left:19.5px;top:292.00px;font-size:10.4px;line-height:10.4px;color:#1f1f1f;-webkit-text-stroke:0.25px #1f1f1f">персик</div>
<div class="t" style="left:100.60px;width:60px;text-align:center;top:292.93px;font-size:9.3px;line-height:9.3px;color:#1f1f1f;-webkit-text-stroke:0.25px #1f1f1f">85</div>
<div class="t" style="left:176.00px;width:60px;text-align:right;top:292.93px;font-size:9.3px;line-height:9.3px;color:#1f1f1f;-webkit-text-stroke:0.25px #1f1f1f">0,79</div>
<div class="t" style="left:247.50px;width:60px;text-align:right;top:292.93px;font-size:9.3px;line-height:9.3px;color:#1f1f1f;-webkit-text-stroke:0.25px #1f1f1f">9,5</div>
<div class="t" style="left:319.50px;width:60px;text-align:right;top:292.93px;font-size:9.3px;line-height:9.3px;color:#1f1f1f;-webkit-text-stroke:0.25px #1f1f1f">0,1</div>
<div class="t" style="left:399.00px;width:60px;text-align:right;top:292.93px;font-size:9.3px;line-height:9.3px;color:#1f1f1f;-webkit-text-stroke:0.25px #1f1f1f">39,1</div>
<div class="a" style="left:18px;top:304px;width:443px;height:15px;background:#c6c80c"></div>
<div class="t" style="left:19.5px;top:307.00px;font-size:10.4px;line-height:10.4px;color:#1f1f1f;-webkit-text-stroke:0.25px #1f1f1f">помидор</div>
<div class="t" style="left:100.60px;width:60px;text-align:center;top:307.93px;font-size:9.3px;line-height:9.3px;color:#1f1f1f;-webkit-text-stroke:0.25px #1f1f1f">115</div>
<div class="t" style="left:176.00px;width:60px;text-align:right;top:307.93px;font-size:9.3px;line-height:9.3px;color:#1f1f1f;-webkit-text-stroke:0.25px #1f1f1f">1,29</div>
<div class="t" style="left:247.50px;width:60px;text-align:right;top:307.93px;font-size:9.3px;line-height:9.3px;color:#1f1f1f;-webkit-text-stroke:0.25px #1f1f1f">4,2</div>
<div class="t" style="left:319.50px;width:60px;text-align:right;top:307.93px;font-size:9.3px;line-height:9.3px;color:#1f1f1f;-webkit-text-stroke:0.25px #1f1f1f">0,2</div>
<div class="t" style="left:399.00px;width:60px;text-align:right;top:307.93px;font-size:9.3px;line-height:9.3px;color:#1f1f1f;-webkit-text-stroke:0.25px #1f1f1f">22,68</div>
<div class="a" style="left:18px;top:319px;width:443px;height:15px;background:#c6c80c"></div>
<div class="t" style="left:19.5px;top:322.00px;font-size:10.4px;line-height:10.4px;color:#1f1f1f;-webkit-text-stroke:0.25px #1f1f1f">яблоко</div>
<div class="t" style="left:100.60px;width:60px;text-align:center;top:322.93px;font-size:9.3px;line-height:9.3px;color:#1f1f1f;-webkit-text-stroke:0.25px #1f1f1f">130</div>
<div class="t" style="left:176.00px;width:60px;text-align:right;top:322.93px;font-size:9.3px;line-height:9.3px;color:#1f1f1f;-webkit-text-stroke:0.25px #1f1f1f">0,26</div>
<div class="t" style="left:247.50px;width:60px;text-align:right;top:322.93px;font-size:9.3px;line-height:9.3px;color:#1f1f1f;-webkit-text-stroke:0.25px #1f1f1f">10,4</div>
<div class="t" style="left:319.50px;width:60px;text-align:right;top:322.93px;font-size:9.3px;line-height:9.3px;color:#1f1f1f;-webkit-text-stroke:0.25px #1f1f1f">0,47</div>
<div class="t" style="left:399.00px;width:60px;text-align:right;top:322.93px;font-size:9.3px;line-height:9.3px;color:#1f1f1f;-webkit-text-stroke:0.25px #1f1f1f">48,103</div>
<div class="a" style="left:18px;top:334px;width:443px;height:15px;background:#b19191"></div>
<div class="t" style="left:19.5px;top:337.00px;font-size:10.4px;line-height:10.4px;color:#1f1f1f;-webkit-text-stroke:0.25px #1f1f1f">банан</div>
<div class="t" style="left:100.60px;width:60px;text-align:center;top:337.93px;font-size:9.3px;line-height:9.3px;color:#1f1f1f;-webkit-text-stroke:0.25px #1f1f1f">120</div>
<div class="t" style="left:176.00px;width:60px;text-align:right;top:337.93px;font-size:9.3px;line-height:9.3px;color:#1f1f1f;-webkit-text-stroke:0.25px #1f1f1f">1,8</div>
<div class="t" style="left:247.50px;width:60px;text-align:right;top:337.93px;font-size:9.3px;line-height:9.3px;color:#1f1f1f;-webkit-text-stroke:0.25px #1f1f1f">25,2</div>
<div class="t" style="left:319.50px;width:60px;text-align:right;top:337.93px;font-size:9.3px;line-height:9.3px;color:#1f1f1f;-webkit-text-stroke:0.25px #1f1f1f">0,12</div>
<div class="t" style="left:399.00px;width:60px;text-align:right;top:337.93px;font-size:9.3px;line-height:9.3px;color:#1f1f1f;-webkit-text-stroke:0.25px #1f1f1f">111,996</div>
<div class="a" style="left:18px;top:349px;width:443px;height:15px;background:#b19191"></div>
<div class="t" style="left:19.5px;top:352.00px;font-size:10.4px;line-height:10.4px;color:#1f1f1f;-webkit-text-stroke:0.25px #1f1f1f">грейпфрут</div>
<div class="t" style="left:100.60px;width:60px;text-align:center;top:352.93px;font-size:9.3px;line-height:9.3px;color:#1f1f1f;-webkit-text-stroke:0.25px #1f1f1f">130</div>
<div class="t" style="left:176.00px;width:60px;text-align:right;top:352.93px;font-size:9.3px;line-height:9.3px;color:#1f1f1f;-webkit-text-stroke:0.25px #1f1f1f">1,17</div>
<div class="t" style="left:247.50px;width:60px;text-align:right;top:352.93px;font-size:9.3px;line-height:9.3px;color:#1f1f1f;-webkit-text-stroke:0.25px #1f1f1f">8,45</div>
<div class="t" style="left:319.50px;width:60px;text-align:right;top:352.93px;font-size:9.3px;line-height:9.3px;color:#1f1f1f;-webkit-text-stroke:0.25px #1f1f1f">0,26</div>
<div class="t" style="left:399.00px;width:60px;text-align:right;top:352.93px;font-size:9.3px;line-height:9.3px;color:#1f1f1f;-webkit-text-stroke:0.25px #1f1f1f">41,977</div>
<div class="a" style="left:18px;top:364px;width:443px;height:15px;background:#b19191"></div>
<div class="t" style="left:19.5px;top:367.00px;font-size:10.4px;line-height:10.4px;color:#1f1f1f;-webkit-text-stroke:0.25px #1f1f1f">груша</div>
<div class="t" style="left:100.60px;width:60px;text-align:center;top:367.93px;font-size:9.3px;line-height:9.3px;color:#1f1f1f;-webkit-text-stroke:0.25px #1f1f1f">135</div>
<div class="t" style="left:176.00px;width:60px;text-align:right;top:367.93px;font-size:9.3px;line-height:9.3px;color:#1f1f1f;-webkit-text-stroke:0.25px #1f1f1f">0,54</div>
<div class="t" style="left:247.50px;width:60px;text-align:right;top:367.93px;font-size:9.3px;line-height:9.3px;color:#1f1f1f;-webkit-text-stroke:0.25px #1f1f1f">12,82</div>
<div class="t" style="left:319.50px;width:60px;text-align:right;top:367.93px;font-size:9.3px;line-height:9.3px;color:#1f1f1f;-webkit-text-stroke:0.25px #1f1f1f">0,41</div>
<div class="t" style="left:399.00px;width:60px;text-align:right;top:367.93px;font-size:9.3px;line-height:9.3px;color:#1f1f1f;-webkit-text-stroke:0.25px #1f1f1f">58,643</div>
<div class="a" style="left:18px;top:379px;width:443px;height:15px;background:#b19191"></div>
<div class="t" style="left:19.5px;top:382.00px;font-size:10.4px;line-height:10.4px;color:#1f1f1f;-webkit-text-stroke:0.25px #1f1f1f">морковь</div>
<div class="t" style="left:100.60px;width:60px;text-align:center;top:382.93px;font-size:9.3px;line-height:9.3px;color:#1f1f1f;-webkit-text-stroke:0.25px #1f1f1f">75</div>
<div class="t" style="left:176.00px;width:60px;text-align:right;top:382.93px;font-size:9.3px;line-height:9.3px;color:#1f1f1f;-webkit-text-stroke:0.25px #1f1f1f">0,97</div>
<div class="t" style="left:247.50px;width:60px;text-align:right;top:382.93px;font-size:9.3px;line-height:9.3px;color:#1f1f1f;-webkit-text-stroke:0.25px #1f1f1f">5,4</div>
<div class="t" style="left:319.50px;width:60px;text-align:right;top:382.93px;font-size:9.3px;line-height:9.3px;color:#1f1f1f;-webkit-text-stroke:0.25px #1f1f1f">0,07</div>
<div class="t" style="left:399.00px;width:60px;text-align:right;top:382.93px;font-size:9.3px;line-height:9.3px;color:#1f1f1f;-webkit-text-stroke:0.25px #1f1f1f">26,865</div>
<div class="a" style="left:18px;top:394px;width:443px;height:15px;background:#0b8c3d"></div>
<div class="t" style="left:19.5px;top:397.00px;font-size:10.4px;line-height:10.4px;color:#0a3a1a;-webkit-text-stroke:0.25px #0a3a1a">огурец</div>
<div class="t" style="left:100.60px;width:60px;text-align:center;top:397.93px;font-size:9.3px;line-height:9.3px;color:#0a3a1a;-webkit-text-stroke:0.25px #0a3a1a">100</div>
<div class="t" style="left:176.00px;width:60px;text-align:right;top:397.93px;font-size:9.3px;line-height:9.3px;color:#0a3a1a;-webkit-text-stroke:0.25px #0a3a1a">0,8</div>
<div class="t" style="left:247.50px;width:60px;text-align:right;top:397.93px;font-size:9.3px;line-height:9.3px;color:#0a3a1a;-webkit-text-stroke:0.25px #0a3a1a">2,6</div>
<div class="t" style="left:319.50px;width:60px;text-align:right;top:397.93px;font-size:9.3px;line-height:9.3px;color:#0a3a1a;-webkit-text-stroke:0.25px #0a3a1a">0,1</div>
<div class="t" style="left:399.00px;width:60px;text-align:right;top:397.93px;font-size:9.3px;line-height:9.3px;color:#0a3a1a;-webkit-text-stroke:0.25px #0a3a1a">14,95</div>
<div class="a" style="left:18px;top:409px;width:443px;height:15px;background:#0b8c3d"></div>
<div class="t" style="left:19.5px;top:412.00px;font-size:10.4px;line-height:10.4px;color:#0a3a1a;-webkit-text-stroke:0.25px #0a3a1a">перец сладкий</div>
<div class="t" style="left:100.60px;width:60px;text-align:center;top:412.93px;font-size:9.3px;line-height:9.3px;color:#0a3a1a;-webkit-text-stroke:0.25px #0a3a1a">200</div>
<div class="t" style="left:176.00px;width:60px;text-align:right;top:412.93px;font-size:9.3px;line-height:9.3px;color:#0a3a1a;-webkit-text-stroke:0.25px #0a3a1a">2,6</div>
<div class="t" style="left:247.50px;width:60px;text-align:right;top:412.93px;font-size:9.3px;line-height:9.3px;color:#0a3a1a;-webkit-text-stroke:0.25px #0a3a1a">10,6</div>
<div class="t" style="left:319.50px;width:60px;text-align:right;top:412.93px;font-size:9.3px;line-height:9.3px;color:#0a3a1a;-webkit-text-stroke:0.25px #0a3a1a">0</div>
<div class="t" style="left:399.00px;width:60px;text-align:right;top:412.93px;font-size:9.3px;line-height:9.3px;color:#0a3a1a;-webkit-text-stroke:0.25px #0a3a1a">54,38</div>
<div class="a" style="left:18px;top:213.25px;width:443px;height:1.5px;background:rgba(30,20,10,0.55)"></div>
<div class="a" style="left:18px;top:258.25px;width:443px;height:1.5px;background:rgba(30,20,10,0.55)"></div>
<div class="a" style="left:18px;top:273.25px;width:443px;height:1.5px;background:rgba(30,20,10,0.55)"></div>
<div class="a" style="left:18px;top:288.25px;width:443px;height:1.5px;background:rgba(30,20,10,0.55)"></div>
<div class="a" style="left:18px;top:303.25px;width:443px;height:1.5px;background:rgba(30,20,10,0.55)"></div>
<div class="a" style="left:18px;top:318.25px;width:443px;height:1.5px;background:rgba(30,20,10,0.55)"></div>
<div class="a" style="left:18px;top:333.25px;width:443px;height:1.5px;background:rgba(30,20,10,0.55)"></div>
<div class="a" style="left:18px;top:348.25px;width:443px;height:1.5px;background:rgba(30,20,10,0.55)"></div>
<div class="a" style="left:18px;top:363.25px;width:443px;height:1.5px;background:rgba(30,20,10,0.55)"></div>
<div class="a" style="left:18px;top:378.25px;width:443px;height:1.5px;background:rgba(30,20,10,0.55)"></div>
<div class="a" style="left:18px;top:393.25px;width:443px;height:1.5px;background:rgba(30,20,10,0.55)"></div>
<div class="a" style="left:18px;top:408.25px;width:443px;height:1.5px;background:rgba(30,20,10,0.55)"></div>
<div class="a" style="left:18px;top:423.25px;width:443px;height:1.5px;background:rgba(30,20,10,0.55)"></div>
<div class="a" style="left:17.4px;top:213px;width:1.3px;height:211px;background:rgba(30,20,10,0.6)"></div>
<div class="a" style="left:94.0px;top:213px;width:1.3px;height:211px;background:rgba(30,20,10,0.6)"></div>
<div class="a" style="left:166.0px;top:213px;width:1.3px;height:211px;background:rgba(30,20,10,0.6)"></div>
<div class="a" style="left:237.4px;top:213px;width:1.3px;height:211px;background:rgba(30,20,10,0.6)"></div>
<div class="a" style="left:308.9px;top:213px;width:1.3px;height:211px;background:rgba(30,20,10,0.6)"></div>
<div class="a" style="left:380.9px;top:213px;width:1.3px;height:211px;background:rgba(30,20,10,0.6)"></div>
<div class="a" style="left:460.4px;top:213px;width:1.3px;height:211px;background:rgba(30,20,10,0.6)"></div>
<div class="a" style="left:17px;top:213px;width:445px;height:1.5px;background:#3a5a4a"></div>
<div class="a" style="left:460px;top:213px;width:1.8px;height:212px;background:#4e9a6a"></div>
<div class="a" style="left:17px;top:423px;width:445px;height:1.8px;background:#4e9a6a"></div>
<div class="a" style="left:459px;top:422px;width:4px;height:4px;background:#2f5f44"></div>
<div class="a" style="left:232px;top:125.5px;width:591px;height:199.5px;background:#f0f0f0;border:1px solid #9fb6c2;box-shadow:0 0 4px rgba(0,0,0,0.25)"></div>
<div class="a" style="left:233px;top:126.5px;width:589px;height:23px;background:#fff"></div>
<div class="t" style="left:239.5px;top:134.05px;font-size:8.8px;line-height:8.8px;color:#222">Сортировка</div>
<div class="t" style="left:769px;top:132.11px;font-size:10.5px;line-height:10.5px;color:#444">?</div>
<svg class="a" style="left:801px;top:132.5px;" width="9" height="8.5" viewBox="0 0 9 8.5"><path d="M0.5 0.5l8 7.5M8.5 0.5l-8 7.5" stroke="#3a3a3a" stroke-width="1.3"/></svg>
<div class="a" style="left:238.5px;top:155px;width:100.5px;height:18px;background:#e4e4e4;border:1px solid #c2c2c2;"></div>
<svg class="a" style="left:242px;top:157px;" width="13" height="14" viewBox="0 0 13 14"><path d="M2 1v5M-0.5 3.5h5" stroke="#3d6aa6" stroke-width="1"/><text x="5" y="7" font-size="5" font-family="Liberation Sans" fill="#555">A</text><text x="5" y="13" font-size="5" font-family="Liberation Sans" fill="#555">Я</text><path d="M10 4v8M8.5 10.5L10 12l1.5-1.5" fill="none" stroke="#555" stroke-width="0.8"/></svg>
<div class="t" style="left:258.5px;top:159.85px;font-size:8.8px;line-height:8.8px;color:#1e1e1e">Добавить уровень</div>
<div class="a" style="left:342.5px;top:155px;width:93.0px;height:18px;background:#e4e4e4;border:1px solid #c2c2c2;"></div>
<svg class="a" style="left:348.5px;top:158.5px;" width="11" height="11" viewBox="0 0 11 11"><path d="M0.8 0.8l9.4 9.4M10.2 0.8L0.8 10.2" stroke="#505050" stroke-width="1.7"/></svg>
<div class="t" style="left:362px;top:159.85px;font-size:8.8px;line-height:8.8px;color:#1e1e1e">Удалить уровень</div>
<div class="a" style="left:439px;top:155px;width:110px;height:18px;background:#e4e4e4;border:1px solid #c2c2c2;"></div>
<svg class="a" style="left:443px;top:157px;" width="14" height="13" viewBox="0 0 14 13"><path d="M0.5 0.5h6l2 2v6h-8z" fill="#fff" stroke="#555"/><path d="M4.5 3.5h6l2 2v6h-8z" fill="#fff" stroke="#555"/></svg>
<div class="t" style="left:459.5px;top:159.85px;font-size:8.8px;line-height:8.8px;color:#1e1e1e">Копировать уровень</div>
<div class="a" style="left:550.5px;top:154px;width:1px;height:20px;background:#444"></div>
<div class="a" style="left:553.5px;top:155px;width:17.5px;height:18px;background:#e4e4e4;border:1px solid #c2c2c2;border-color:#c8c8c8;background:#e6e6e6"></div>
<svg class="a" style="left:558px;top:162px;" width="8" height="4" viewBox="0 0 8 4"><path d="M0 4L4 0l4 4z" fill="#b8b8b8"/></svg>
<div class="a" style="left:574px;top:155px;width:17.5px;height:18px;background:#e4e4e4;border:1px solid #c2c2c2;border-color:#c8c8c8;background:#e6e6e6"></div>
<svg class="a" style="left:579px;top:162px;" width="8" height="4" viewBox="0 0 8 4"><path d="M0 0l4 4 4-4z" fill="#b8b8b8"/></svg>
<div class="a" style="left:595.5px;top:155px;width:65.0px;height:18px;background:#e4e4e4;border:1px solid #c2c2c2;"></div>
<div class="t" style="left:601px;top:159.85px;font-size:8.8px;line-height:8.8px;color:#1e1e1e">Параметры...</div>
<div class="a" style="left:668px;top:158.5px;width:10.5px;height:10px;background:#fff;border:1px solid #333"></div>
<svg class="a" style="left:669.5px;top:160px;" width="8" height="7" viewBox="0 0 8 7"><path d="M0.5 3.5l2.3 2.5L7.5 0.8" fill="none" stroke="#222" stroke-width="1.1"/></svg>
<div class="t" style="left:683px;top:159.85px;font-size:8.8px;line-height:8.8px;color:#1e1e1e">Мои данные содержат заголовки</div>
<div class="a" style="left:238px;top:174px;width:581px;height:127px;background:#fff;border:1px solid #b9b9b9"></div>
<div class="t" style="left:243px;top:181.05px;font-size:8.8px;line-height:8.8px;color:#222">Столбец</div>
<div class="t" style="left:438px;top:181.05px;font-size:8.8px;line-height:8.8px;color:#222">Сортировка</div>
<div class="t" style="left:633px;top:181.05px;font-size:8.8px;line-height:8.8px;color:#222">Порядок</div>
<div class="a" style="left:239px;top:191.5px;width:579px;height:21.5px;background:#dcdcdc"></div>
<div class="t" style="left:241px;top:194.05px;font-size:8.8px;line-height:8.8px;color:#1e1e1e">Сортировать по</div>
<div class="a" style="left:313px;top:192.5px;width:114px;height:16px;background:#fff;border:1px solid #c4c4c4"></div>
<div class="a" style="left:340px;top:194px;width:72px;height:13px;overflow:hidden"><div class="t" style="left:28.5px;top:2.55px;font-size:8.8px;line-height:8.8px;color:#1e1e1e">Содержание</div></div>
<div class="a" style="left:412.5px;top:194px;width:13px;height:13px;background:#e8e8e8;border:1px solid #bdbdbd"></div>
<svg class="a" style="left:415px;top:198px;" width="8" height="5" viewBox="0 0 8 5"><path d="M0.5 0.5L4 4 7.5 0.5" fill="none" stroke="#666" stroke-width="1"/></svg>
<div class="a" style="left:435.5px;top:192.5px;width:186px;height:16.5px;background:#fff;border:1px solid #a8a8a8"></div>
<div class="t" style="left:438px;top:197.05px;font-size:8.8px;line-height:8.8px;color:#1e1e1e">Цвет ячейки</div>
<div class="a" style="left:606.5px;top:194px;width:14px;height:13.5px;background:#dbe9f6;border:1px solid #4f8fc9"></div>
<svg class="a" style="left:609.5px;top:198px;" width="8" height="5" viewBox="0 0 8 5"><path d="M0.5 0.5L4 4 7.5 0.5" fill="none" stroke="#333" stroke-width="1"/></svg>
<div class="a" style="left:435.5px;top:208.5px;width:186px;height:40px;background:#fff;border:1px solid #7c7c7c"></div>
<div class="t" style="left:437.5px;top:210.85px;font-size:8.8px;line-height:8.8px;color:#1e1e1e">Значения ячеек</div>
<div class="a" style="left:436.5px;top:219.3px;width:184px;height:9px;background:#99c6ec"></div>
<div class="t" style="left:437.5px;top:220.35px;font-size:8.8px;line-height:8.8px;color:#1e1e1e">Цвет ячейки</div>
<div class="t" style="left:437.5px;top:230.05px;font-size:8.8px;line-height:8.8px;color:#1e1e1e">Цвет шрифта</div>
<div class="t" style="left:437px;top:239.47px;font-size:8.9px;line-height:8.9px;color:#1e1e1e">Значок условного форматирования</div>
<div class="a" style="left:631px;top:193.5px;width:127px;height:19px;background:#e6e6e6;border:1px solid #c6c6c6"></div>
<div class="a" style="left:633.3px;top:196px;width:110px;height:14.5px;background:#f8f800;border:1px solid #6d6d2a"></div>
<svg class="a" style="left:748px;top:201px;" width="7" height="4" viewBox="0 0 7 4"><path d="M0 0h7L3.5 4z" fill="#111"/></svg>
<div class="a" style="left:766.5px;top:193.5px;width:48.5px;height:14px;background:#fff;border:1px solid #cfcfcf"></div>
<div class="t" style="left:769px;top:196.85px;font-size:8.8px;line-height:8.8px;color:#1e1e1e">Сверху</div>
<div class="a" style="left:801.5px;top:195px;width:12.5px;height:11px;background:#ececec;border:1px solid #c8c8c8"></div>
<svg class="a" style="left:804px;top:199px;" width="7" height="4" viewBox="0 0 7 4"><path d="M0.5 0.5L3.5 3.5 6.5 0.5" fill="none" stroke="#777"/></svg>
<div class="a" style="left:700.5px;top:304px;width:55px;height:15.5px;background:#e5e5e5;border:1.5px solid #3b80bb;box-shadow:inset 0 0 0 1px #bcd7ee"></div>
<div class="t" style="left:708.00px;width:40px;text-align:center;top:307.85px;font-size:8.8px;line-height:8.8px;color:#1e1e1e">ОК</div>
<div class="a" style="left:763px;top:304px;width:55px;height:15.5px;background:#e4e4e4;border:1px solid #c2c2c2;"></div>
<div class="t" style="left:765.50px;width:50px;text-align:center;top:307.85px;font-size:8.8px;line-height:8.8px;color:#1e1e1e">Отмена</div>
<div class="a" style="left:5px;top:512px;width:1013px;height:21.5px;background:#e6e6e6"></div>
<div class="a" style="left:5px;top:512px;width:1013px;height:1px;background:#cfcfcf"></div>
<svg class="a" style="left:18px;top:520px;" width="4" height="7" viewBox="0 0 4 7"><path d="M3.5 0.5L0.5 3.5 3.5 6.5z" fill="#bcbcbc"/></svg>
<svg class="a" style="left:39px;top:520px;" width="4" height="7" viewBox="0 0 4 7"><path d="M0.5 0.5L3.5 3.5 0.5 6.5z" fill="#bcbcbc"/></svg>
<div class="a" style="left:73px;top:512px;width:44px;height:18px;background:#fff"></div>
<div class="a" style="left:73.5px;top:528.8px;width:44px;height:1.8px;background:#3f6a52"></div>
<div class="t" style="left:70.00px;width:50px;text-align:center;top:517.46px;font-size:9.5px;line-height:9.5px;font-weight:bold;color:#34503f">Лист1</div>
<svg class="a" style="left:142px;top:516px;" width="14" height="14" viewBox="0 0 14 14"><circle cx="7" cy="7" r="6" fill="none" stroke="#666" stroke-width="1"/><path d="M7 3.5v7M3.5 7h7" stroke="#555" stroke-width="1.2"/></svg>
<svg class="a" style="left:610px;top:518px;" width="4" height="11" viewBox="0 0 4 11"><circle cx="2" cy="1.5" r="0.8" fill="#888"/><circle cx="2" cy="5.5" r="0.8" fill="#888"/><circle cx="2" cy="9.5" r="0.8" fill="#888"/></svg>
<div class="a" style="left:622.5px;top:517px;width:348px;height:12px;background:#fff;border:1px solid #c8c8c8"></div>
<div class="a" style="left:623px;top:517.5px;width:11px;height:11px;background:#fff;border-right:1px solid #d0d0d0"></div>
<svg class="a" style="left:626px;top:520px;" width="4" height="6" viewBox="0 0 4 6"><path d="M3.5 0L0.5 3 3.5 6z" fill="#555"/></svg>
<div class="a" style="left:970.5px;top:517px;width:23px;height:12px;background:#dcdcdc"></div>
<div class="a" style="left:993.5px;top:517px;width:12px;height:11px;background:#fff;border:1px solid #c8c8c8"></div>
<svg class="a" style="left:997.5px;top:520px;" width="4" height="6" viewBox="0 0 4 6"><path d="M0.5 0L3.5 3 0.5 6z" fill="#555"/></svg>
<div class="a" style="left:5px;top:533px;width:1013px;height:1px;background:#d2d2d2"></div>
<div class="a" style="left:5px;top:534px;width:1013px;height:10px;background:linear-gradient(#f1f1f1 0%,#f1f1f1 40%,#e2efe7 100%)"></div>
<div class="a" style="left:805.5px;top:534px;width:26px;height:10px;background:#d3d3d3"></div>
<svg class="a" style="left:812px;top:536px;" width="11" height="9" viewBox="0 0 11 9"><path d="M0.5 0.5h10v8h-10zM4 0.5v8M7 0.5v8M0.5 4h10" fill="none" stroke="#777" stroke-width="0.9"/></svg>
<svg class="a" style="left:840px;top:536px;" width="11" height="9" viewBox="0 0 11 9"><path d="M0.5 0.5h10v8h-10zM3 2.5h5v6M3 2.5v6" fill="none" stroke="#888" stroke-width="0.9"/></svg>
<svg class="a" style="left:868px;top:536px;" width="11" height="9" viewBox="0 0 11 9"><path d="M0.5 0.5h10v8h-10zM5.5 0.5v4h-3" fill="none" stroke="#888" stroke-width="0.9"/></svg>
<div class="a" style="left:891px;top:540px;width:5px;height:1.2px;background:#666"></div>
<div class="a" style="left:897px;top:540.5px;width:79px;height:1px;background:#dcdcdc"></div>
<div class="a" style="left:935px;top:537px;width:3px;height:7px;background:#777"></div>
<div class="a" style="left:977px;top:540px;width:7px;height:1.2px;background:#666"></div>
<div class="a" style="left:980px;top:537px;width:1.2px;height:7px;background:#666"></div>
<div class="t" style="left:991px;top:538.05px;font-size:8.8px;line-height:8.8px;color:#555">100 %</div>
<div class="a" style="left:1016px;top:52px;width:3px;height:492px;background:#bfe3cf"></div>
<div class="a" style="left:0px;top:0px;width:5px;height:549px;background:#0a873e"></div>
<div class="a" style="left:1019px;top:0px;width:1px;height:549px;background:#217346"></div>
<div class="a" style="left:1020px;top:0px;width:4px;height:549px;background:#077d40"></div>
<div class="a" style="left:0px;top:543.5px;width:1024px;height:1px;background:#1d6f47"></div>
<div class="a" style="left:0px;top:544.5px;width:1024px;height:4.5px;background:#077d40"></div>
</body></html>
